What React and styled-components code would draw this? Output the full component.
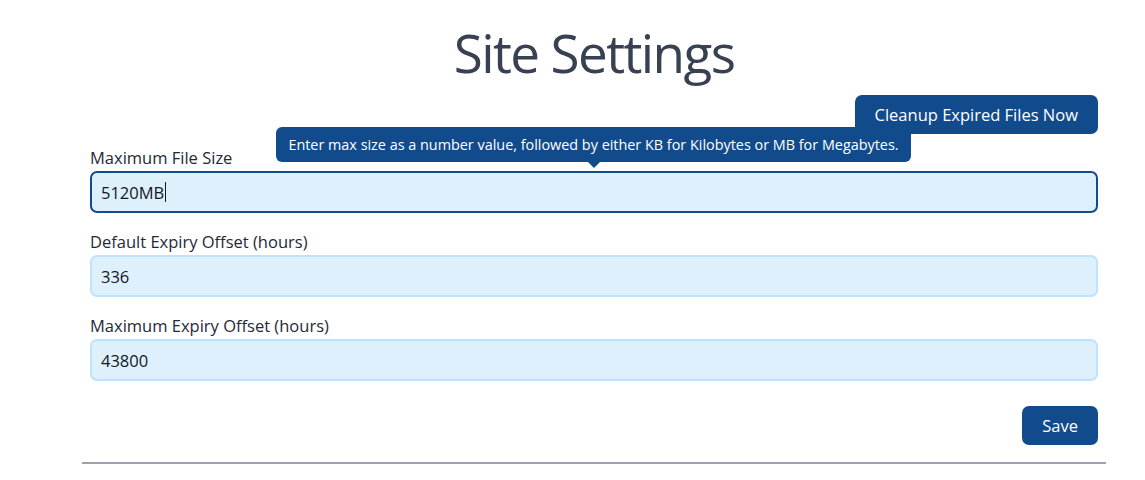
import React from 'react'
import styled, { createGlobalStyle } from 'styled-components'

const GlobalStyle = createGlobalStyle`
  html, body {
    margin: 0;
    padding: 0;
    background: #ffffff;
    font-family: "Open Sans", "Noto Sans", sans-serif;
  }
`;

const Page = styled.div`
  width: 1024px;
  margin-left: 82px;
  padding-top: 15px;
`;

const Title = styled.h1`
  margin: 0 0 5px;
  text-align: center;
  font-size: 53px;
  font-weight: 400;
  letter-spacing: -1.6px;
  line-height: 75px;
  color: #374151;
`;

const Form = styled.form`
  padding: 0 8px;
  display: flex;
  flex-direction: column;
`;

const ActionRow = styled.div`
  display: flex;
  justify-content: flex-end;
  margin-top: ${({ $top }) => $top || 0}px;
`;

const Button = styled.button`
  background: #124b8c;
  color: #ffffff;
  border: none;
  border-radius: 7px;
  height: 39px;
  padding: 0 20px;
  font-family: inherit;
  font-size: 16.5px;
  cursor: pointer;
`;

const Field = styled.div`
  position: relative;
  display: flex;
  flex-direction: column;
  margin-top: ${({ $top }) => $top || 0}px;
`;

const Label = styled.label`
  font-size: 16.5px;
  line-height: 22px;
  color: #1f2937;
`;

const InputWrap = styled.div`
  position: relative;
  margin-top: 2px;
  display: flex;
  flex-direction: column;
`;

const Input = styled.input`
  box-sizing: border-box;
  height: 42px;
  padding: 0 9px;
  border: 2px solid ${({ $active }) => ($active ? '#124b8c' : '#bfe3fb')};
  border-radius: 7px;
  background: #dff0fd;
  font-family: inherit;
  font-size: 16.5px;
  color: #111827;
  outline: none;
`;

const Caret = styled.span`
  position: absolute;
  left: 75px;
  top: 11px;
  width: 1px;
  height: 20px;
  background: #111827;
`;

const Tooltip = styled.div`
  position: absolute;
  left: 186px;
  top: -20px;
  width: 635px;
  height: 35px;
  box-sizing: border-box;
  background: #124b8c;
  color: #ffffff;
  border-radius: 6px;
  font-size: 14.4px;
  display: flex;
  align-items: center;
  justify-content: center;
  z-index: 2;

  &::after {
    content: '';
    position: absolute;
    left: 312px;
    bottom: -6px;
    border-left: 6px solid transparent;
    border-right: 6px solid transparent;
    border-top: 6px solid #124b8c;
  }
`;

const Divider = styled.hr`
  margin: 17px 0 0;
  border: none;
  border-top: 2px solid #9ca3af;
`;

const App = () => {
  return (
    <Page>
      <GlobalStyle />
      <Title>Site Settings</Title>
      <Form onSubmit={(e) => e.preventDefault()}>
        <ActionRow>
          <Button type="button">Cleanup Expired Files Now</Button>
        </ActionRow>
        <Field $top={13}>
          <Tooltip>
            Enter max size as a number value, followed by either KB for Kilobytes or MB for Megabytes.
          </Tooltip>
          <Label>Maximum File Size</Label>
          <InputWrap>
            <Input $active defaultValue="5120MB" />
            <Caret />
          </InputWrap>
        </Field>
        <Field $top={18}>
          <Label>Default Expiry Offset (hours)</Label>
          <InputWrap>
            <Input defaultValue="336" />
          </InputWrap>
        </Field>
        <Field $top={18}>
          <Label>Maximum Expiry Offset (hours)</Label>
          <InputWrap>
            <Input defaultValue="43800" />
          </InputWrap>
        </Field>
        <ActionRow $top={25}>
          <Button type="submit">Save</Button>
        </ActionRow>
      </Form>
      <Divider />
    </Page>
  )
}

export default App
